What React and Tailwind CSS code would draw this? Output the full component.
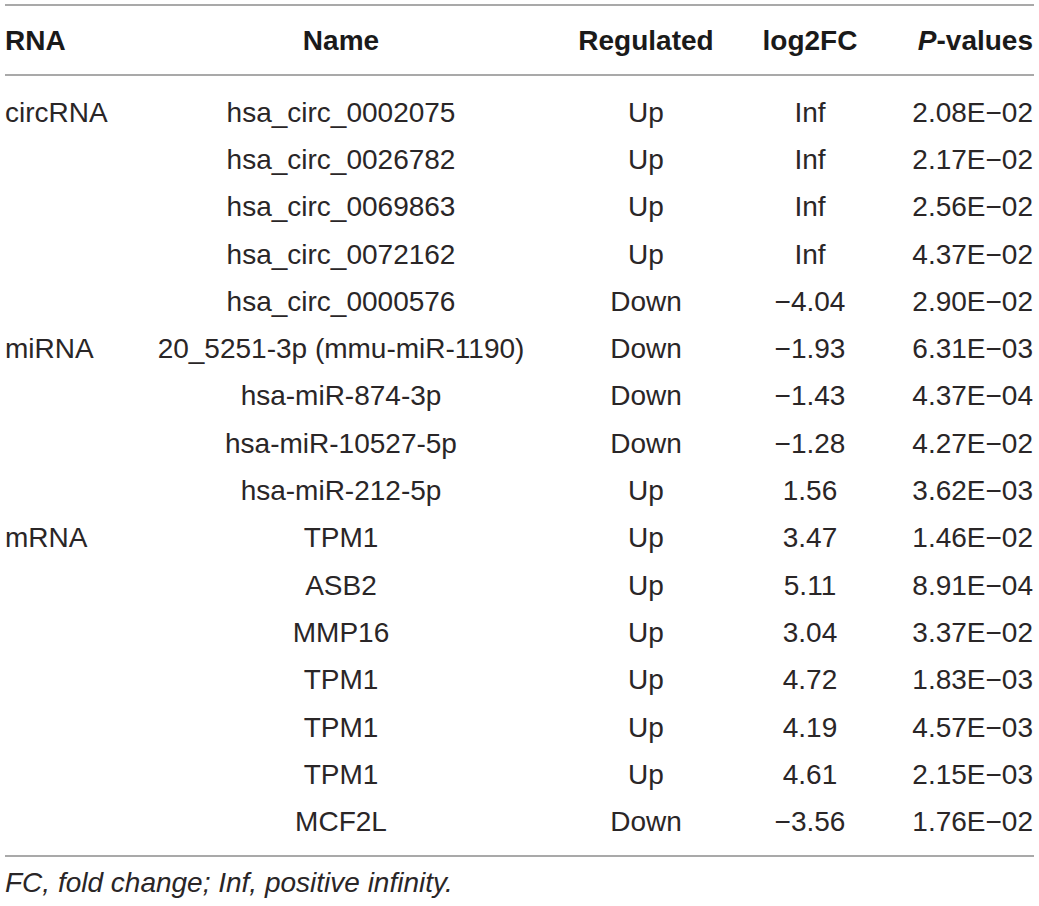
const rows = [
  ['circRNA', 'hsa_circ_0002075', 'Up', 'Inf', '2.08E−02'],
  ['', 'hsa_circ_0026782', 'Up', 'Inf', '2.17E−02'],
  ['', 'hsa_circ_0069863', 'Up', 'Inf', '2.56E−02'],
  ['', 'hsa_circ_0072162', 'Up', 'Inf', '4.37E−02'],
  ['', 'hsa_circ_0000576', 'Down', '−4.04', '2.90E−02'],
  ['miRNA', '20_5251-3p (mmu-miR-1190)', 'Down', '−1.93', '6.31E−03'],
  ['', 'hsa-miR-874-3p', 'Down', '−1.43', '4.37E−04'],
  ['', 'hsa-miR-10527-5p', 'Down', '−1.28', '4.27E−02'],
  ['', 'hsa-miR-212-5p', 'Up', '1.56', '3.62E−03'],
  ['mRNA', 'TPM1', 'Up', '3.47', '1.46E−02'],
  ['', 'ASB2', 'Up', '5.11', '8.91E−04'],
  ['', 'MMP16', 'Up', '3.04', '3.37E−02'],
  ['', 'TPM1', 'Up', '4.72', '1.83E−03'],
  ['', 'TPM1', 'Up', '4.19', '4.57E−03'],
  ['', 'TPM1', 'Up', '4.61', '2.15E−03'],
  ['', 'MCF2L', 'Down', '−3.56', '1.76E−02'],
];

const cols = 'grid grid-cols-[145px_382px_228px_100px_173px] items-center';

export default function App() {
  return (
    <div className="w-[1039px] h-[906px] bg-white px-[5px] pt-[4px] font-['Liberation_Sans',Arial,sans-serif] text-[28px] text-[#2a2627]">
      <div className="border-t-2 border-b-2 border-[#a9a9a9]">
        <div className={`${cols} h-[70px] pt-[2px] border-b-2 border-[#a9a9a9] font-bold text-[#1a1a1a]`}>
          <div className="text-left">RNA</div>
          <div className="text-center">Name</div>
          <div className="text-center">Regulated</div>
          <div className="text-center">log2FC</div>
          <div className="text-right">
            <span className="italic">P</span>-values
          </div>
        </div>
        <div className="pt-[13px] pb-[9px]">
          {rows.map(([rna, name, reg, fc, p], i) => (
            <div key={i} className={`${cols} h-[47.3px] leading-none`}>
              <div className="text-left">{rna}</div>
              <div className="text-center whitespace-nowrap">{name}</div>
              <div className="text-center">{reg}</div>
              <div className="text-center">{fc}</div>
              <div className="text-right">{p}</div>
            </div>
          ))}
        </div>
      </div>
      <p className="pt-[10px] leading-[32px] italic">FC, fold change; Inf, positive infinity.</p>
    </div>
  );
}
